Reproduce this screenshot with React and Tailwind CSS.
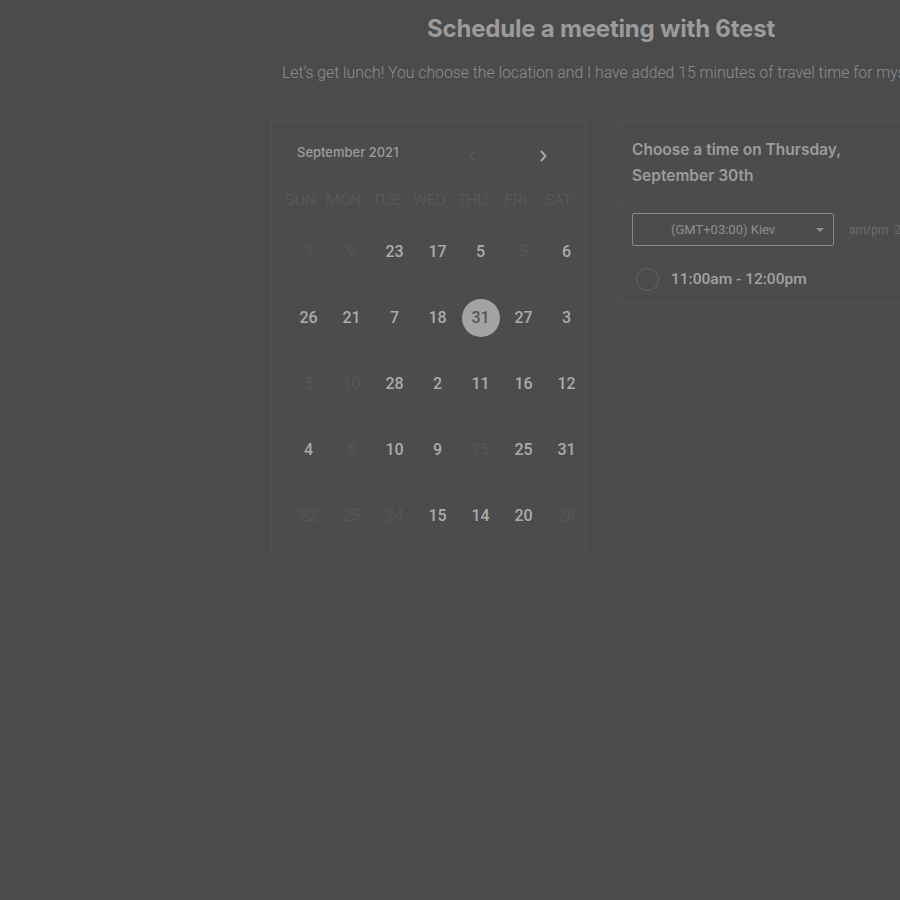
import React from "react";

const rows = [
  [["3", 0], ["9", 0], ["23", 1], ["17", 1], ["5", 1], ["5", 0], ["6", 1]],
  [["26", 1], ["21", 1], ["7", 1], ["18", 1], ["31", 2], ["27", 1], ["3", 1]],
  [["5", 0], ["10", 0], ["28", 1], ["2", 1], ["11", 1], ["16", 1], ["12", 1]],
  [["4", 1], ["5", 0], ["10", 1], ["9", 1], ["25", 0], ["25", 1], ["31", 1]],
  [["22", 0], ["25", 0], ["24", 0], ["15", 1], ["14", 1], ["20", 1], ["28", 0]],
];

const heads = ["SUN", "MON", "TUE", "WED", "THU", "FRI", "SAT"];

export default function App() {
  return (
    <div className="w-[900px] h-[900px] bg-[#4b4b4b] overflow-hidden" style={{ fontFamily: "Roboto, sans-serif" }}>
      <div className="ml-[271px] w-[660px] pt-[13px]">
        <h1 className="text-center text-[24px] leading-[32px] font-bold tracking-[-0.2px] text-[#9b9b9b]" style={{ fontFamily: "Inter, sans-serif" }}>
          Schedule a meeting with 6test
        </h1>
        <p className="mt-[20px] pl-[11px] whitespace-nowrap text-[15.75px] leading-[16px] font-light text-[#8d8d8d]">
          Let’s get lunch! You choose the location and I have added 15 minutes of travel time for myself
        </p>
        <div className="flex mt-[39px] gap-[31px]">
          <div className="w-[315px] shrink-0 border border-[#525252] bg-[#4c4c4c] pt-[20px] pb-[1px]">
            <div className="flex items-center h-[24px]">
              <span className="ml-[25px] w-[165px] text-[13px] font-medium text-[#9c9c9c]" style={{ fontFamily: "Inter, sans-serif" }}>September 2021</span>
              <svg className="ml-[6px] mt-[6px]" width="10" height="16" viewBox="0 0 10 16" fill="none" stroke="#585858" strokeWidth="1.6"><path d="M7 3 L2.5 8 L7 13" /></svg>
              <svg className="ml-[60px] mt-[6px]" width="10" height="16" viewBox="0 0 10 16" fill="none" stroke="#a6a6a6" strokeWidth="2"><path d="M3 3 L7.5 8 L3 13" /></svg>
            </div>
            <div className="grid grid-cols-[repeat(7,43px)] ml-[7px] mt-[24px] h-[24px] items-center">
              {heads.map((h) => (
                <div key={h} className="text-center text-[15.5px] font-light text-[#5d5d5d]">{h}</div>
              ))}
            </div>
            <div className="grid grid-cols-[repeat(7,43px)] ml-[15px] mt-[6px]">
              {rows.flat().map(([n, s], i) => (
                <div key={i} className="h-[66px] flex items-center justify-center">
                  {s === 2 ? (
                    <div className="w-[38px] h-[38px] rounded-full bg-[#a3a3a3] flex items-center justify-center text-[16px] font-medium text-[#555555]">{n}</div>
                  ) : (
                    <span className={s === 1 ? "text-[16px] font-medium text-[#ababab]" : "text-[16px] font-normal text-[#565656]"}>{n}</span>
                  )}
                </div>
              ))}
            </div>
          </div>
          <div className="w-[320px] shrink-0 h-[184px] border border-[#525252] bg-[#4c4c4c]">
            <div className="border-b border-[#525252] pl-[14px] pt-[16px] pb-[15px] text-[15.5px] leading-[26px] font-semibold text-[#9c9c9c]" style={{ fontFamily: "Inter, sans-serif" }}>
              Choose a time on Thursday,<br />September 30th
            </div>
            <div className="flex items-center pl-[14px] mt-[8px]">
              <div className="w-[202px] h-[33px] border border-[#878787] rounded-[2px] flex items-center relative">
                <span className="ml-[38px] text-[13px] text-[#8e8e8e]">(GMT+03:00) Kiev</span>
                <svg className="absolute right-[9px] top-[14px]" width="8" height="5" viewBox="0 0 8 5"><path d="M0 0 L8 0 L4 4 Z" fill="#8e8e8e" /></svg>
              </div>
              <span className="ml-[15px] text-[12px] text-[#6c6c6c] whitespace-nowrap">am/pm&nbsp;&nbsp;24h</span>
            </div>
            <div className="flex items-center pl-[18px] mt-[22px]">
              <div className="w-[23px] h-[23px] rounded-full border-[1.5px] border-[#676767]"></div>
              <span className="ml-[12px] text-[15.5px] font-medium text-[#a2a2a2]">11:00am - 12:00pm</span>
            </div>
          </div>
        </div>
      </div>
    </div>
  );
}
